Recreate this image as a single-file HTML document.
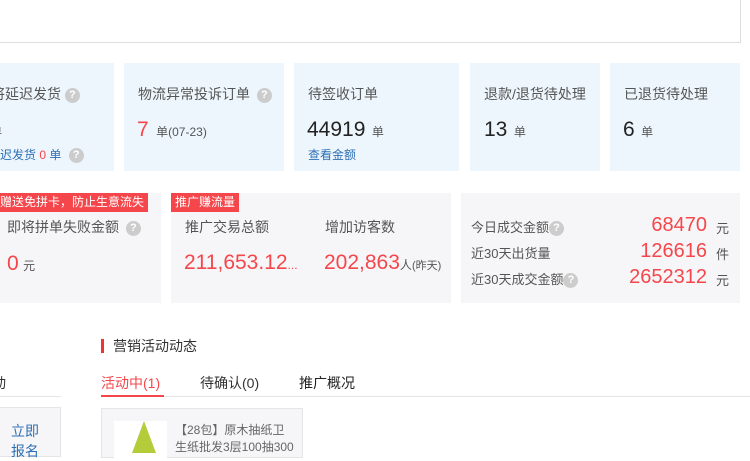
<!DOCTYPE html>
<html><head><meta charset="utf-8"><style>
*{margin:0;padding:0;box-sizing:border-box}
body{width:750px;height:450px;overflow:hidden;background:#fff;position:relative;font-family:"Liberation Sans","Noto Sans CJK SC",sans-serif;color:#333}
.a{position:absolute;white-space:nowrap}
.c1{background:#eef6fd;position:absolute;top:63px;height:108px}
.c2{background:#f6f6f8;position:absolute;top:193px;height:110px}
.q{display:inline-block;width:15px;height:15px;border-radius:50%;background:#ccc;color:#fff;font-size:11px;line-height:15px;text-align:center;font-weight:bold;vertical-align:1px}
.t{font-size:14px;color:#555}
.red{color:#f5464b}
.blue{color:#2d6fb5}
.tag{position:absolute;background:#f5464b;color:#fff;font-size:12px;height:19px;line-height:19px;padding:0 4px}
.tag:after{content:"";position:absolute;right:-7px;top:0;border-top:9.5px solid transparent;border-bottom:9.5px solid transparent;border-right:7px solid #f6f6f8}
</style></head><body>
<div class="a" style="left:-2px;top:-2px;width:743px;height:45px;border:1px solid #ddd;background:#fff"></div>

<div class="c1" style="left:0;width:114px"></div>
<div class="c1" style="left:124px;width:160px"></div>
<div class="c1" style="left:294px;width:165px"></div>
<div class="c1" style="left:470px;width:130px"></div>
<div class="c1" style="left:610px;width:130px"></div>

<div class="a t" style="left:-9px;top:84px">将延迟发货 <span class="q">?</span></div>
<div class="a" style="left:-10px;top:122px;font-size:12px;color:#555">单</div>
<div class="a blue" style="left:-12px;top:146px;font-size:12px">延迟发货 <span class="red">0</span> 单 <span class="q" style="margin-left:4px">?</span></div>

<div class="a t" style="left:138px;top:84px">物流异常投诉订单 <span class="q" style="margin-left:3px">?</span></div>
<div class="a" style="left:137px;top:118px"><span class="red" style="font-size:21px">7</span> <span style="font-size:12px;color:#555;margin-left:3px">单(07-23)</span></div>

<div class="a t" style="left:308px;top:84px">待签收订单</div>
<div class="a" style="left:307px;top:118px"><span style="font-size:21px;color:#222">44919</span> <span style="font-size:12px;color:#555;margin-left:2px">单</span></div>
<div class="a blue" style="left:308px;top:146px;font-size:12px">查看金额</div>

<div class="a t" style="left:484px;top:84px">退款/退货待处理</div>
<div class="a" style="left:484px;top:118px"><span style="font-size:21px;color:#222">13</span> <span style="font-size:12px;color:#555;margin-left:2px">单</span></div>

<div class="a t" style="left:624px;top:84px">已退货待处理</div>
<div class="a" style="left:623px;top:118px"><span style="font-size:21px;color:#222">6</span> <span style="font-size:12px;color:#555;margin-left:2px">单</span></div>

<div class="c2" style="left:0;width:161px"></div>
<div class="c2" style="left:171px;width:280px"></div>
<div class="c2" style="left:461px;width:279px"></div>

<div class="tag" style="left:-4px;top:193px">赠送免拼卡，防止生意流失</div>
<div class="a t" style="left:7px;top:217px">即将拼单失败金额 <span class="q" style="margin-left:3px">?</span></div>
<div class="a" style="left:7px;top:252px"><span class="red" style="font-size:21px">0</span> <span style="font-size:12px;color:#555">元</span></div>

<div class="tag" style="left:171px;top:193px">推广赚流量</div>
<div class="a t" style="left:185px;top:217px">推广交易总额</div>
<div class="a red" style="left:184px;top:251px;font-size:21px">211,653.12<span style="font-size:12px">...</span></div>
<div class="a t" style="left:325px;top:217px">增加访客数</div>
<div class="a" style="left:324px;top:251px"><span class="red" style="font-size:21px">202,863</span><span style="font-size:12px;color:#555">人<span style="font-size:11px">(昨天)</span></span></div>

<div class="a" style="left:471px;top:217px;font-size:13px;color:#555">今日成交金额<span class="q">?</span></div>
<div class="a" style="left:471px;top:243px;font-size:13px;color:#555">近30天出货量</div>
<div class="a" style="left:471px;top:269px;font-size:13px;color:#555">近30天成交金额<span class="q">?</span></div>
<div class="a red" style="right:43px;top:214px;font-size:20px">68470</div>
<div class="a red" style="right:43px;top:240px;font-size:20px">126616</div>
<div class="a red" style="right:43px;top:266px;font-size:20px">2652312</div>
<div class="a" style="left:716px;top:218px;font-size:13px;color:#555">元</div>
<div class="a" style="left:716px;top:244px;font-size:13px;color:#555">件</div>
<div class="a" style="left:716px;top:270px;font-size:13px;color:#555">元</div>

<div class="a" style="left:101px;top:339px;width:3px;height:14px;background:#e33"></div>
<div class="a" style="left:113px;top:336px;font-size:14px;color:#333">营销活动动态</div>

<div class="a" style="left:-8px;top:373px;font-size:14px;color:#333">动</div>
<div class="a" style="left:0;top:396px;width:61px;height:1px;background:#e5e5e5"></div>
<div class="a" style="left:-2px;top:407px;width:63px;height:50px;border:1px solid #e5e5e5;background:#f6f6f8"></div>
<div class="a blue" style="left:11px;top:421px;font-size:14px">立即</div>
<div class="a blue" style="left:11px;top:441px;font-size:14px">报名</div>

<div class="a red" style="left:101px;top:373px;font-size:14px">活动中(1)</div>
<div class="a" style="left:200px;top:373px;font-size:14px;color:#333">待确认(0)</div>
<div class="a" style="left:299px;top:373px;font-size:14px;color:#222">推广概况</div>
<div class="a" style="left:101px;top:396px;width:649px;height:1px;background:#e5e5e5"></div>
<div class="a" style="left:101px;top:395px;width:63px;height:2px;background:#f5464b"></div>

<div class="a" style="left:101px;top:408px;width:202px;height:50px;border:1px solid #e5e5e5;background:#f6f6f8"></div>
<div class="a" style="left:114px;top:421px;width:53px;height:40px;background:#fff"></div>
<div class="a" style="left:132px;top:421px;width:0;height:0;border-left:12px solid transparent;border-right:12px solid transparent;border-bottom:32px solid #b5cc3a"></div>
<div class="a" style="left:175px;top:421px;font-size:12px;color:#666">【28包】原木抽纸卫</div>
<div class="a" style="left:175px;top:438px;font-size:12px;color:#666">生纸批发3层100抽300</div>
</body></html>
